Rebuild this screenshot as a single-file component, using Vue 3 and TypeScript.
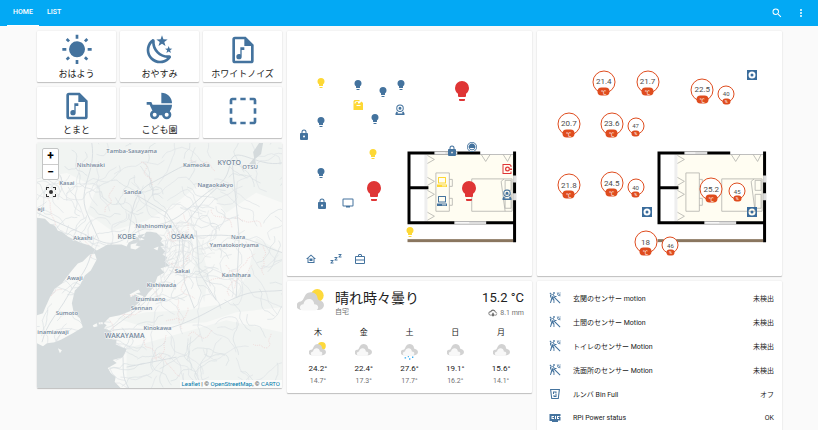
<script setup lang="ts">
import { ref } from 'vue'

const icons: Record<string, string> = {
  sun: 'M3.55,18.54L4.96,19.95L6.76,18.16L5.34,16.74M11,22.45H13V19.5H11M12,5.5A6,6 0 0,0 6,11.5A6,6 0 0,0 12,17.5A6,6 0 0,0 18,11.5C18,8.18 15.31,5.5 12,5.5M20,12.5H23V10.5H20M17.24,18.16L19.04,19.95L20.45,18.54L18.66,16.74M20.45,4.46L19.04,3.05L17.24,4.84L18.66,6.26M13,0.55H11V3.5H13M4,10.5H1V12.5H4M6.76,4.84L4.96,3.05L3.55,4.46L5.34,6.26L6.76,4.84Z',
  night: 'M17.75,4.09L15.22,6.03L16.13,9.09L13.5,7.28L10.87,9.09L11.78,6.03L9.25,4.09L12.44,4L13.5,1L14.56,4L17.75,4.09M21.25,11L19.61,12.25L20.2,14.23L18.5,13.06L16.8,14.23L17.39,12.25L15.75,11L17.81,10.95L18.5,9L19.19,10.95L21.25,11M18.97,15.95C19.8,15.87 20.69,17.05 20.16,17.8C19.84,18.25 19.5,18.67 19.08,19.07C15.17,23 8.84,23 4.94,19.07C1.03,15.17 1.03,8.83 4.94,4.93C5.34,4.53 5.76,4.17 6.21,3.85C6.96,3.32 8.14,4.21 8.06,5.04C7.79,7.9 8.75,10.87 10.95,13.06C13.14,15.26 16.1,16.22 18.97,15.95M17.33,17.97C14.5,17.81 11.7,16.64 9.53,14.5C7.36,12.31 6.2,9.5 6.04,6.68C3.23,9.82 3.34,14.64 6.35,17.66C9.37,20.67 14.19,20.78 17.33,17.97Z',
  music: 'M6,2A2,2 0 0,0 4,4V20A2,2 0 0,0 6,22H18A2,2 0 0,0 20,20V8L14,2H6M6,4H13V9H18V20H6V4M13,10V12H11V17A2,2 0 0,1 9,19A2,2 0 0,1 7,17A2,2 0 0,1 9,15C9.4,15 9.7,15.1 10,15.3V10H13Z',
  carriage: 'M13,2V10H21A8,8 0 0,0 13,2M19.32,15.89C20.37,14.54 21,12.84 21,11H6.44L5.5,9H2V11H4.22C4.22,11 6.11,15.07 6.34,15.42C5.24,16 4.5,17.17 4.5,18.5A3.5,3.5 0 0,0 8,22C9.76,22 11.22,20.7 11.46,19H13.54C13.78,20.7 15.24,22 17,22A3.5,3.5 0 0,0 20.5,18.5C20.5,17.46 20.04,16.53 19.32,15.89M8,20A1.5,1.5 0 0,1 6.5,18.5A1.5,1.5 0 0,1 8,17A1.5,1.5 0 0,1 9.5,18.5A1.5,1.5 0 0,1 8,20M17,20A1.5,1.5 0 0,1 15.5,18.5A1.5,1.5 0 0,1 17,17A1.5,1.5 0 0,1 18.5,18.5A1.5,1.5 0 0,1 17,20Z',
  selection: 'M2,4C2,2.89 2.9,2 4,2H7V4H4V7H2V4M22,4V7H20V4H17V2H20A2,2 0 0,1 22,4M20,20V17H22V20C22,21.11 21.1,22 20,22H17V20H20M2,20V17H4V20H7V22H4A2,2 0 0,1 2,20M10,2H14V4H10V2M10,20H14V22H10V20M20,10H22V14H20V10M2,10H4V14H2V10Z',
  search: 'M9.5,3A6.5,6.5 0 0,1 16,9.5C16,11.11 15.41,12.59 14.44,13.73L14.71,14H15.5L20.5,19L19,20.5L14,15.5V14.71L13.73,14.44C12.59,15.41 11.11,16 9.5,16A6.5,6.5 0 0,1 3,9.5A6.5,6.5 0 0,1 9.5,3M9.5,5C7,5 5,7 5,9.5C5,12 7,14 9.5,14C12,14 14,12 14,9.5C14,7 12,5 9.5,5Z',
  dots: 'M12,16A2,2 0 0,1 14,18A2,2 0 0,1 12,20A2,2 0 0,1 10,18A2,2 0 0,1 12,16M12,10A2,2 0 0,1 14,12A2,2 0 0,1 12,14A2,2 0 0,1 10,12A2,2 0 0,1 12,10M12,4A2,2 0 0,1 14,6A2,2 0 0,1 12,8A2,2 0 0,1 10,6A2,2 0 0,1 12,4Z',
  bulb: 'M12,2A7,7 0 0,0 5,9C5,11.38 6.19,13.47 8,14.74V17A1,1 0 0,0 9,18H15A1,1 0 0,0 16,17V14.74C17.81,13.47 19,11.38 19,9A7,7 0 0,0 12,2M9,21A1,1 0 0,0 10,22H14A1,1 0 0,0 15,21V20H9V21Z',
  lock: 'M12,17A2,2 0 0,0 14,15C14,13.89 13.1,13 12,13A2,2 0 0,0 10,15A2,2 0 0,0 12,17M18,8A2,2 0 0,1 20,10V20A2,2 0 0,1 18,22H6A2,2 0 0,1 4,20V10C4,8.89 4.9,8 6,8H7V6A5,5 0 0,1 12,1A5,5 0 0,1 17,6V8H18M12,3A3,3 0 0,0 9,6V8H15V6A3,3 0 0,0 12,3Z',
  tap: 'M5,2H15V4.500H8C6.500,4.500 5,6 5,9H7C7,7 8,6 10,6H12V9H15L19,5L22,8V22H3V6C3,4 3.500,3 5,2M9,12V14H17V12Z',
  webcam: 'M12,1A7.5,7.5 0 0,1 19.5,8.5A7.5,7.5 0 0,1 12,16A7.5,7.5 0 0,1 4.5,8.5A7.5,7.5 0 0,1 12,1M12,3A5.5,5.5 0 0,0 6.5,8.5A5.5,5.5 0 0,0 12,14A5.5,5.5 0 0,0 17.5,8.5A5.5,5.5 0 0,0 12,3M12,5.5A3,3 0 0,1 15,8.5A3,3 0 0,1 12,11.5A3,3 0 0,1 9,8.5A3,3 0 0,1 12,5.5M5,15L8,17L7,19H17L16,17L19,15L21,19V22H3V19Z',
  tv: 'M21,17H3V5H21M21,3H3A2,2 0 0,0 1,5V17A2,2 0 0,0 3,19H8V21H16V19H21A2,2 0 0,0 23,17V5A2,2 0 0,0 21,3Z',
  vacuum: 'M12,2A10,10 0 0,1 22,12A10,10 0 0,1 12,22A10,10 0 0,1 2,12A10,10 0 0,1 12,2M12,3.5A8.5,8.5 0 0,0 12,20.5A8.5,8.5 0 0,0 12,3.5M12,5C14,5 16,6 17,7.5L19,11C19,15 16,18.500 12,18.500C8,18.500 5,15 5,11L7,7.500C8,6 10,5 12,5M7,14C9,17.500 15,17.500 17,14Z',
  doorcam: 'M3,2H18L21,5V8H19V6L17,4H5V20H19V17H21V22H3ZM13,7A5,5 0 0,1 13,17A5,5 0 0,1 13,7M13,9.5A2.5,2.5 0 0,0 13,14.5A2.5,2.5 0 0,0 13,9.5M18,11H22V14H18Z',
  computer: 'M5,2H19A1,1 0 0,1 20,3V14A1,1 0 0,1 19,15H5A1,1 0 0,1 4,14V3A1,1 0 0,1 5,2M6,4V13H18V4ZM2,17H22V22H2ZM12,19V20.5H20V19Z',
  home: 'M12,3L2,12H5V20H19V12H22L12,3M7,18V10.2L12,5.7L17,10.2V18ZM9,11H15V16H9Z',
  sleep: 'M23,9H17V7.5L20.2,4H17V2H23V3.5L19.8,7H23V9M15,15H9V13.5L12.2,10H9V8H15V9.5L11.8,13H15V15M7,21H1V19.5L4.2,16H1V14H7V15.5L3.8,19H7V21Z',
  bag: 'M8,6V4L10,2H14L16,4V6H20A2,2 0 0,1 22,8V20A2,2 0 0,1 20,22H4A2,2 0 0,1 2,20V8A2,2 0 0,1 4,6ZM10,6H14V4H10ZM4,8V13H20V8ZM4,15V20H20V15Z',
  fan: 'M2,2H22V22H2ZM12,5A7,7 0 0,0 12,19A7,7 0 0,0 12,5M12,9A3,3 0 0,1 12,15A3,3 0 0,1 12,9',
  motion: 'M10,0.2C9,0.2 8.2,1 8.2,2C8.2,3 9,3.8 10,3.8C11,3.8 11.8,3 11.8,2C11.8,1 11,0.2 10,0.2M15.67,1A7.33,7.33 0 0,0 23,8.33V7A6,6 0 0,1 17,1H15.67M18.33,1C18.33,3.58 20.42,5.67 23,5.67V4.33C21.16,4.33 19.67,2.84 19.67,1H18.33M21,1A2,2 0 0,0 23,3V1H21M7.92,4.03L7.42,4.11L2,5.8V11H3.8V7.33L5.91,6.67L2,22H3.8L6.67,13.89L9,17V22H10.8V15.59L8.31,11.05L9.04,8.18L10.12,10H15V8.2H11.38L9.38,4.87C9.08,4.37 8.54,4.03 7.92,4.03M1,2.5L2.5,1L23,21.5L21.5,23Z',
  bin: 'M2,2H22L19.5,22H4.5ZM4.5,4L6.3,20H17.7L19.5,4ZM8,7H15V11H13V9H10V12H8ZM9,14H11V16H13V12H15V18H9Z',
  power: 'M1,4H23V8H21V10H23V17H18V20H6V18H1ZM5,8V14H10V12H7V10H10V8ZM12,8V14H14V8ZM16,8V14H20V12H18V10H20V8Z',
  focus: 'M2,2H8V4H4V8H2ZM16,2H22V8H20V4H16ZM2,16H4V20H8V22H2ZM20,16H22V22H16V20H20ZM12,8A4,4 0 0,1 12,16A4,4 0 0,1 12,8',
  precipitation: 'M8,18H6A5,5 0 0,1 1,13C1,10 3,8.2 5.5,8A7,7 0 0,1 18.7,9.2A4.5,4.5 0 0,1 18.5,18H16V16H18.5A2.5,2.5 0 0,0 18.5,11H17V10A5,5 0 0,0 7.4,10H6A3,3 0 0,0 6,16H8ZM12,10L15,15A3.5,3.5 0 1,1 9,15Z',
}

const tabs = ['HOME', 'LIST']
const activeTab = ref('HOME')

const scenes = [
  { icon: 'sun', label: 'おはよう' },
  { icon: 'night', label: 'おやすみ' },
  { icon: 'music', label: 'ホワイトノイズ' },
  { icon: 'music', label: 'とまと' },
  { icon: 'carriage', label: 'こども園' },
  { icon: 'selection', label: '' },
]

// Floor plan positions are in the plan's own 246-unit square.
interface Device { icon: string; x: number; y: number; tone?: string; large?: boolean }
const devices: Device[] = [
  { icon: 'bulb', x: 34, y: 52, tone: 'on' },
  { icon: 'bulb', x: 71, y: 54 },
  { icon: 'bulb', x: 96, y: 61 },
  { icon: 'bulb', x: 114, y: 54 },
  { icon: 'tap', x: 71, y: 74, tone: 'on' },
  { icon: 'webcam', x: 113, y: 79 },
  { icon: 'bulb', x: 34, y: 91 },
  { icon: 'bulb', x: 88, y: 88 },
  { icon: 'lock', x: 17, y: 104 },
  { icon: 'bulb', x: 86, y: 123, tone: 'on' },
  { icon: 'bulb', x: 34, y: 143 },
  { icon: 'bulb', x: 87, y: 161, tone: 'alert', large: true },
  { icon: 'bulb', x: 176, y: 60, tone: 'alert', large: true },
  { icon: 'lock', x: 35, y: 174 },
  { icon: 'tv', x: 61, y: 173 },
  { icon: 'lock', x: 166, y: 120 },
  { icon: 'vacuum', x: 186, y: 116 },
  { icon: 'doorcam', x: 221, y: 139, tone: 'alert' },
  { icon: 'computer', x: 156, y: 152, tone: 'on' },
  { icon: 'computer', x: 156, y: 171 },
  { icon: 'bulb', x: 183, y: 161, tone: 'alert', large: true },
  { icon: 'webcam', x: 221, y: 165 },
  { icon: 'bulb', x: 123, y: 202, tone: 'on' },
  { icon: 'home', x: 24, y: 229 },
  { icon: 'sleep', x: 49, y: 229 },
  { icon: 'bag', x: 73, y: 229 },
]

const fans: Device[] = [
  { icon: 'fan', x: 216, y: 44 },
  { icon: 'fan', x: 110, y: 182 },
  { icon: 'fan', x: 216, y: 182 },
]

interface Badge { value: string; x: number; y: number; small?: boolean }
const badges: Badge[] = [
  { value: '21.4', x: 67, y: 51 },
  { value: '21.7', x: 111, y: 51 },
  { value: '22.5', x: 166, y: 59 },
  { value: '40', x: 190, y: 63, small: true },
  { value: '20.7', x: 32, y: 93 },
  { value: '23.6', x: 75, y: 93 },
  { value: '47', x: 99, y: 95, small: true },
  { value: '21.8', x: 32, y: 155 },
  { value: '24.5', x: 75, y: 153 },
  { value: '40', x: 99, y: 157, small: true },
  { value: '25.2', x: 175, y: 159 },
  { value: '45', x: 201, y: 161, small: true },
  { value: '18', x: 109, y: 212 },
  { value: '46', x: 134, y: 215, small: true },
]

const place = (p: { x: number; y: number }) => ({
  left: `${(p.x / 246) * 100}%`,
  top: `${(p.y / 246) * 100}%`,
})

const forecast = [
  { day: '木', high: '24.2°', low: '14.7°', sun: true },
  { day: '金', high: '22.4°', low: '17.3°' },
  { day: '土', high: '27.6°', low: '17.7°', rain: true },
  { day: '日', high: '19.1°', low: '16.2°' },
  { day: '月', high: '15.6°', low: '14.1°' },
]

const sensors = [
  { icon: 'motion', name: '玄関のセンサー motion', state: '未検出' },
  { icon: 'motion', name: '土間のセンサー Motion', state: '未検出' },
  { icon: 'motion', name: 'トイレのセンサー Motion', state: '未検出' },
  { icon: 'motion', name: '洗面所のセンサー Motion', state: '未検出' },
  { icon: 'bin', name: 'ルンバ Bin Full', state: 'オフ' },
  { icon: 'power', name: 'RPi Power status', state: 'OK' },
]

const places = [
  { name: 'Tamba-Sasayama', x: 95, y: 10 },
  { name: 'Nishiwaki', x: 54, y: 24 },
  { name: 'Kameoka', x: 160, y: 24 },
  { name: 'KYOTO', x: 193, y: 22, city: true },
  { name: 'OTSU', x: 214, y: 26 },
  { name: 'Kasai', x: 30, y: 42 },
  { name: 'Nagaokakyo', x: 179, y: 44 },
  { name: 'Sanda', x: 96, y: 51 },
  { name: 'eji', x: 4, y: 68 },
  { name: 'Nishinomiya', x: 117, y: 85 },
  { name: 'KOBE', x: 90, y: 96, city: true },
  { name: 'OSAKA', x: 146, y: 96, city: true },
  { name: 'Akashi', x: 46, y: 97 },
  { name: 'Nara', x: 202, y: 96 },
  { name: 'Yamatokoriyama', x: 198, y: 104 },
  { name: 'Awaji', x: 38, y: 138 },
  { name: 'Sakai', x: 146, y: 131 },
  { name: 'Kashihara', x: 200, y: 135 },
  { name: 'Kishiwada', x: 125, y: 145 },
  { name: 'Izumisano', x: 114, y: 159 },
  { name: 'Sennan', x: 105, y: 168 },
  { name: 'Sumoto', x: 30, y: 173 },
  { name: 'inamiawaji', x: 16, y: 192 },
  { name: 'Kinokawa', x: 121, y: 188 },
  { name: 'WAKAYAMA', x: 88, y: 196, city: true },
]

// Minor roads and streams: smooth random walks from a fixed seed.
let seed = 41
const rand = () => {
  seed = (seed * 16807) % 2147483647
  return seed / 2147483647
}
const walk = (x: number, y: number, steps: number, stride: number) => {
  let angle = rand() * Math.PI * 2
  let d = `M${x.toFixed(1)},${y.toFixed(1)}`
  for (let i = 0; i < steps; i++) {
    angle += (rand() - 0.5) * 1.7
    const mx = x + Math.cos(angle) * stride
    const my = y + Math.sin(angle) * stride
    angle += (rand() - 0.5) * 1.3
    x = mx + Math.cos(angle) * stride
    y = my + Math.sin(angle) * stride
    d += `Q${mx.toFixed(1)},${my.toFixed(1)} ${x.toFixed(1)},${y.toFixed(1)}`
  }
  return d
}
const many = (n: number, steps: number, stride: number) =>
  Array.from({ length: n }, () => walk(rand() * 246, rand() * 246, steps, stride)).join('')
const streams = many(130, 6, 3)
const roads = many(90, 7, 4)
const trails = many(34, 8, 2)
const streets = Array.from({ length: 46 }, () =>
  walk(128 + rand() * 42, 72 + rand() * 62, 4, 3)).join('')
</script>

<template>
  <div class="page">
    <svg class="defs" aria-hidden="true">
      <symbol id="plan" viewBox="0 0 246 246">
        <rect x="141" y="124" width="86" height="68" fill="#fffdf2" />
        <rect x="138" y="124" width="3" height="68" fill="#eeeeee" />
        <path d="M121,121H230V124H124V156H142V159H124V191H227V124H230V212H227V194H121Z" fill="#000" />
        <path d="M194,120H227V124H194Z" fill="#fff" />
        <path d="M148,121H171V124H148ZM168,191H200V194H168ZM227,145H230V152H227ZM227,163H230V170H227Z" fill="#dedede" />
        <path d="M149,122H159V123H149ZM169,192H183V193H169Z" fill="#fff" />
        <rect x="121" y="209" width="106" height="3" fill="#8a765f" />
        <g fill="none" stroke="#b1b1ac" stroke-width=".8">
          <path d="M141,125L148,129L141,133M141,147L148,151L141,155M141,160L148,164L141,168M141,182L148,186L141,190M195,124L199.500,131L204,124M217,124L221.500,131L225,124" />
          <path d="M149.500,142.500H163V181H149.500ZM163,149H166V156H163M163,168H166V175H163" />
          <path d="M185.500,148.500H226V181H185.500ZM218,148.500L215,151L219,181M219,150H225V160H219ZM219,164H225V178H219Z" />
        </g>
      </symbol>
      <symbol id="clouds" viewBox="0 0 80 80">
        <path d="M12,62A12,12 0 0,1 11,37C17,35 18,30 24,19C31,6 54,6 60,22C61,28 61,31 66,33C86,36 83,62 65,62Z" fill="#d2d2d2" />
        <path d="M18,64C5,62 6,46 19,45C22,25 50,24 51,45C67,45 66,63 53,64Z" fill="#f8f8f8" />
      </symbol>
    </svg>

    <header class="bar">
      <nav class="tabs">
        <a v-for="t in tabs" :key="t" href="#" class="tab" :class="{ active: t === activeTab }"
          @click.prevent="activeTab = t">{{ t }}</a>
      </nav>
      <div class="actions">
        <button type="button" aria-label="Search">
          <svg viewBox="0 0 24 24"><path :d="icons.search" /></svg>
        </button>
        <button type="button" aria-label="Menu">
          <svg viewBox="0 0 24 24"><path :d="icons.dots" /></svg>
        </button>
      </div>
    </header>

    <main class="columns">
      <section class="column">
        <div class="scenes">
          <button v-for="(s, i) in scenes" :key="i" type="button" class="card scene" :class="{ blank: !s.label }"
            :aria-label="s.label || 'Scene'">
            <svg viewBox="0 0 24 24"><path :d="icons[s.icon]" fill-rule="evenodd" /></svg>
            <span v-if="s.label">{{ s.label }}</span>
          </button>
        </div>

        <div class="card map">
          <svg class="tiles" viewBox="0 0 246 246">
            <rect width="246" height="246" fill="#f8f9f7" />
            <path d="M0,0H246V60L220,50L190,70L165,40L140,60L110,78L75,88L50,70L60,45L30,30L0,35ZM246,110L220,95L212,130L195,160L150,168L110,170L80,176L105,184L170,180L200,170L246,165ZM90,206L130,195L190,178L246,190V246H90ZM160,90L172,130L168,160L158,130Z" fill="#f1f4f2" />
            <path :d="streams" class="stream" />
            <path :d="roads" class="road" />
            <path :d="streets" class="street" />
            <path :d="trails" class="trail" />
            <path class="highway" d="M0,70C20,80 40,88 62,98S92,88 118,83S150,66 168,52S190,40 194,20S220,25 246,20M140,92C160,96 180,90 200,94S230,105 246,110M142,90C148,120 130,140 108,160S78,182 72,190M75,188C100,184 120,192 145,182S178,165 198,156S225,150 246,148M150,80L170,55L186,40M92,90C96,70 95,50 115,40S140,25 160,18M96,50L130,70L144,92M146,90L148,140L158,166M160,88L163,130L180,158M196,20L200,60L203,95L200,155M55,0C60,30 40,45 50,70L62,97M54,112C50,130 38,140 30,155S10,180 5,200M84,205C90,220 82,230 92,246M90,225L140,215" />
            <path fill-rule="evenodd" fill="#d4dadc" d="M0,75L8,76L13,81L18,83L21,88L25,89L31,94L43,100L53,103L60,108L71,102L85,102L90,104L92,100L96,98L99,94L104,96L110,89H114L120,90L126,96L124,99L128,103L124,104L129,109L126,112L131,115L128,119L133,123L124,126L128,130L121,134L117,145L112,150L108,156L96,168L83,173L73,175L67,181L70,183L67,186L75,189L71,196L80,198L79,202L85,205L90,207L86,215L76,218L80,221L71,226L74,231L79,235L78,240L84,246H0V201L6,204L10,201L18,200L25,197L36,191L46,185L43,176L37,171L35,161L38,148L43,143L48,133L54,128L60,117L58,111L53,112L46,119L41,121L35,128L25,141L18,146L13,155L8,166L6,171L0,173ZM93,152L102,147L104,150L99,151L107,154L105,156L99,152L94,155ZM56,183L60,181L61,184L57,185ZM62,180H66V182H62ZM21,206L25,208L23,211ZM94,102L101,100L99,103L104,104L99,107L94,106ZM101,93L108,91L108,94L104,95L108,97L103,98ZM117,106L122,104L121,108ZM98,164L104,159L103,163Z" />
            <path d="M213,21L218,15L217,9L223,0L227,0L225,11L219,16L220,22Z" fill="#d4dadc" />
            <path d="M129,98V125M132,98L127,108M62,98L56,112" class="road" />
            <text v-for="p in places" :key="p.name" :x="p.x" :y="p.y" :class="{ city: p.city }">{{ p.name }}</text>
          </svg>
          <div class="map-tools">
            <div class="zoom">
              <button type="button" aria-label="Zoom in">+</button>
              <button type="button" aria-label="Zoom out">−</button>
            </div>
            <button type="button" class="recenter" aria-label="Recenter">
              <svg viewBox="0 0 24 24"><path :d="icons.focus" /></svg>
            </button>
          </div>
          <p class="credits">
            <a href="#">Leaflet</a> | © <a href="#">OpenStreetMap</a>, © <a href="#">CARTO</a>
          </p>
        </div>
      </section>

      <section class="column">
        <div class="card plan">
          <svg class="drawing" viewBox="0 0 246 246"><use href="#plan" /></svg>
          <button v-for="(d, i) in devices" :key="i" type="button" class="device" :class="[d.tone, { large: d.large }]"
            :style="place(d)" :aria-label="d.icon">
            <svg viewBox="0 0 24 24"><path :d="icons[d.icon]" fill-rule="evenodd" /></svg>
          </button>
        </div>

        <div class="card weather">
          <div class="now">
            <svg class="now-icon" viewBox="0 0 80 80">
              <circle cx="60" cy="19" r="19" fill="#fdd93c" />
              <use href="#clouds" />
            </svg>
            <div class="summary">
              <h2>晴れ時々曇り</h2>
              <p>自宅</p>
            </div>
            <div class="reading">
              <strong>15.2 °C</strong>
              <p><svg viewBox="0 0 24 24"><path :d="icons.precipitation" fill-rule="evenodd" /></svg>8.1 mm</p>
            </div>
          </div>
          <ul class="forecast">
            <li v-for="f in forecast" :key="f.day">
              <span class="day">{{ f.day }}</span>
              <svg viewBox="0 0 80 80">
                <circle v-if="f.sun" cx="60" cy="19" r="19" fill="#fdd93c" />
                <use href="#clouds" />
                <path v-if="f.rain" fill="#30a8ee" d="M17,72H24V78H17ZM32,66H37V72H32ZM38,77H44V83H38ZM52,68H58V75H52Z" />
              </svg>
              <span class="high">{{ f.high }}</span>
              <span class="low">{{ f.low }}</span>
            </li>
          </ul>
        </div>
      </section>

      <section class="column">
        <div class="card plan">
          <svg class="drawing" viewBox="0 0 246 246"><use href="#plan" /></svg>
          <button v-for="(d, i) in fans" :key="i" type="button" class="device fan" :style="place(d)" :aria-label="d.icon">
            <svg viewBox="0 0 24 24"><path :d="icons[d.icon]" fill-rule="evenodd" /></svg>
          </button>
          <div v-for="(b, i) in badges" :key="i" class="badge" :class="{ small: b.small }" :style="place(b)">
            <span class="value">{{ b.value }}</span>
            <span class="unit">{{ b.small ? '%' : '℃' }}</span>
          </div>
        </div>

        <ul class="card sensors">
          <li v-for="s in sensors" :key="s.name">
            <svg viewBox="0 0 24 24"><path :d="icons[s.icon]" :fill-rule="s.icon === 'motion' ? 'nonzero' : 'evenodd'" /></svg>
            <span class="name">{{ s.name }}</span>
            <span>{{ s.state }}</span>
          </li>
        </ul>
      </section>
    </main>
  </div>
</template>

<style>
html {
  scrollbar-width: none;
}
body {
  margin: 0;
  background: #fff;
}
</style>

<style scoped>
* {
  box-sizing: border-box;
}
.page {
  min-height: 100vh;
  margin-right: 2px;
  background: #fafafa;
  color: #212121;
  font-family: Roboto, "Noto Sans CJK JP", sans-serif;
}
button {
  margin: 0;
  padding: 0;
  border: 0;
  background: none;
  color: inherit;
  font: inherit;
  cursor: pointer;
}
svg {
  display: block;
  fill: currentColor;
}
p,
h2,
ul {
  margin: 0;
  padding: 0;
  list-style: none;
}
.defs {
  position: absolute;
  width: 0;
  height: 0;
}
.bar {
  display: flex;
  justify-content: space-between;
  height: 26px;
  padding: 0 11px 0 7px;
  background: #03a9f4;
  color: #fff;
}
.tabs {
  display: flex;
  gap: 2px;
}
.tab {
  padding: 0 6px;
  border-bottom: 1px solid transparent;
  color: inherit;
  font-size: 7px;
  font-weight: 500;
  line-height: 25px;
  text-decoration: none;
}
.tab.active {
  border-color: #fff;
}
.actions {
  display: flex;
  align-items: center;
  gap: 12px;
}
.actions svg {
  width: 12px;
  height: 12px;
}
.columns {
  display: grid;
  grid-template-columns: repeat(3, minmax(0, 1fr));
  gap: 5px;
  padding: 5px 36px 0 37px;
}
.column {
  display: flex;
  flex-direction: column;
  gap: 5px;
}
.card {
  border-radius: 1px;
  background: #fff;
  box-shadow: 0 1px 1px rgba(0, 0, 0, 0.22), 0 0 2px rgba(0, 0, 0, 0.1);
}
.scenes {
  display: grid;
  grid-template-columns: repeat(3, 1fr);
  gap: 5px 4px;
}
.scene {
  display: flex;
  flex-direction: column;
  align-items: center;
  justify-content: center;
  height: 51px;
  padding-top: 2px;
  color: #44739e;
}
.scene.blank {
  padding: 0 0 4px;
}
.scene svg {
  width: 32px;
  height: 32px;
}
.scene span {
  color: #212121;
  font-size: 9px;
  line-height: 16px;
  white-space: nowrap;
}
.map {
  position: relative;
  aspect-ratio: 1;
  overflow: hidden;
}
.tiles {
  width: 100%;
  height: 100%;
}
.tiles path.stream,
.tiles path.road,
.tiles path.street,
.tiles path.trail,
.tiles path.highway {
  fill: none;
}
.stream {
  stroke: #d6dee1;
  stroke-width: 0.6;
}
.road {
  stroke: #e0e3e6;
  stroke-width: 0.7;
}
.street {
  stroke: #dfe2e5;
  stroke-width: 0.5;
}
.trail {
  stroke: #efcfd0;
  stroke-width: 0.7;
  stroke-dasharray: 1 1;
}
.highway {
  stroke: #d8dde1;
  stroke-width: 0.9;
}
.tiles text {
  fill: #74879b;
  stroke: #f8f9f8;
  stroke-width: 1px;
  paint-order: stroke;
  font-family: "Open Sans", sans-serif;
  font-size: 6px;
  font-weight: 600;
  text-anchor: middle;
}
.tiles text.city {
  font-size: 7px;
}
.map-tools {
  position: absolute;
  top: 5px;
  left: 5px;
  display: flex;
  flex-direction: column;
  align-items: center;
  gap: 6px;
}
.zoom {
  display: flex;
  flex-direction: column;
  border: 1px solid #c3c5c5;
  border-radius: 2px;
  background: #fff;
}
.zoom button {
  width: 15px;
  height: 15px;
  color: #000;
  font-size: 12px;
  font-weight: 700;
  line-height: 15px;
}
.zoom button + button {
  border-top: 1px solid #ccc;
}
.recenter svg {
  width: 12px;
  height: 12px;
  color: #333;
}
.credits {
  position: absolute;
  right: 0;
  bottom: 0;
  padding: 0 2px;
  background: rgba(255, 255, 255, 0.7);
  color: #333;
  font-size: 6px;
  line-height: 8px;
}
.credits a {
  color: #0078a8;
  text-decoration: none;
}
.plan {
  position: relative;
  aspect-ratio: 1;
}
.drawing {
  width: 100%;
  height: 100%;
}
.device {
  position: absolute;
  color: #44739e;
  transform: translate(-50%, -50%);
}
.device svg {
  width: 12px;
  height: 12px;
}
.device.large svg {
  width: 24px;
  height: 24px;
}
.device.on {
  color: #fdd835;
}
.device.alert {
  color: #df3535;
}
.device.fan {
  color: #3a6c9b;
}
.badge {
  position: absolute;
  display: flex;
  align-items: center;
  justify-content: center;
  width: 23px;
  height: 23px;
  border: 1px solid #df4c1e;
  border-radius: 50%;
  background: #fff;
  color: #4c4c4c;
  font-size: 8px;
  line-height: 1;
  transform: translate(-50%, -50%);
}
.badge .unit {
  position: absolute;
  bottom: -3px;
  left: 50%;
  min-width: 12px;
  border-radius: 4px;
  background: #df4c1e;
  color: #fff;
  font-size: 5px;
  line-height: 8px;
  text-align: center;
  transform: translateX(-50%);
}
.badge.small {
  width: 17px;
  height: 17px;
  font-size: 6px;
}
.badge.small .unit {
  min-width: 8px;
  font-size: 4px;
  line-height: 6px;
}
.weather {
  padding: 7px 8px 6px;
}
.now {
  display: flex;
  padding-left: 2px;
}
.now-icon {
  width: 27px;
  height: 27px;
  margin: 1px 11px 0 0;
}
.summary {
  flex: 1;
}
.summary h2 {
  font-size: 14px;
  font-weight: 400;
  line-height: 20px;
}
.summary p,
.reading p {
  color: #727272;
  font-size: 7px;
  line-height: 8px;
}
.reading {
  text-align: right;
}
.reading strong {
  display: block;
  font-size: 13px;
  font-weight: 400;
  line-height: 20px;
}
.reading p {
  display: flex;
  align-items: center;
  justify-content: flex-end;
  gap: 2px;
}
.reading svg {
  width: 10px;
  height: 10px;
}
.forecast {
  display: grid;
  grid-template-columns: repeat(5, 1fr);
  padding-top: 9px;
}
.forecast li {
  display: flex;
  flex-direction: column;
  align-items: center;
  font-size: 8px;
  line-height: 12px;
}
.forecast svg {
  width: 17px;
  height: 17px;
  margin: 3px 0 4px;
  overflow: visible;
}
.forecast .low {
  color: #727272;
  font-size: 7px;
}
.sensors {
  padding: 5px 8px 5px 12px;
}
.sensors li {
  display: flex;
  align-items: center;
  height: 24px;
  font-size: 7px;
}
.sensors svg {
  width: 12px;
  height: 12px;
  margin-right: 12px;
  color: #44739e;
}
.sensors .name {
  flex: 1;
}
</style>
